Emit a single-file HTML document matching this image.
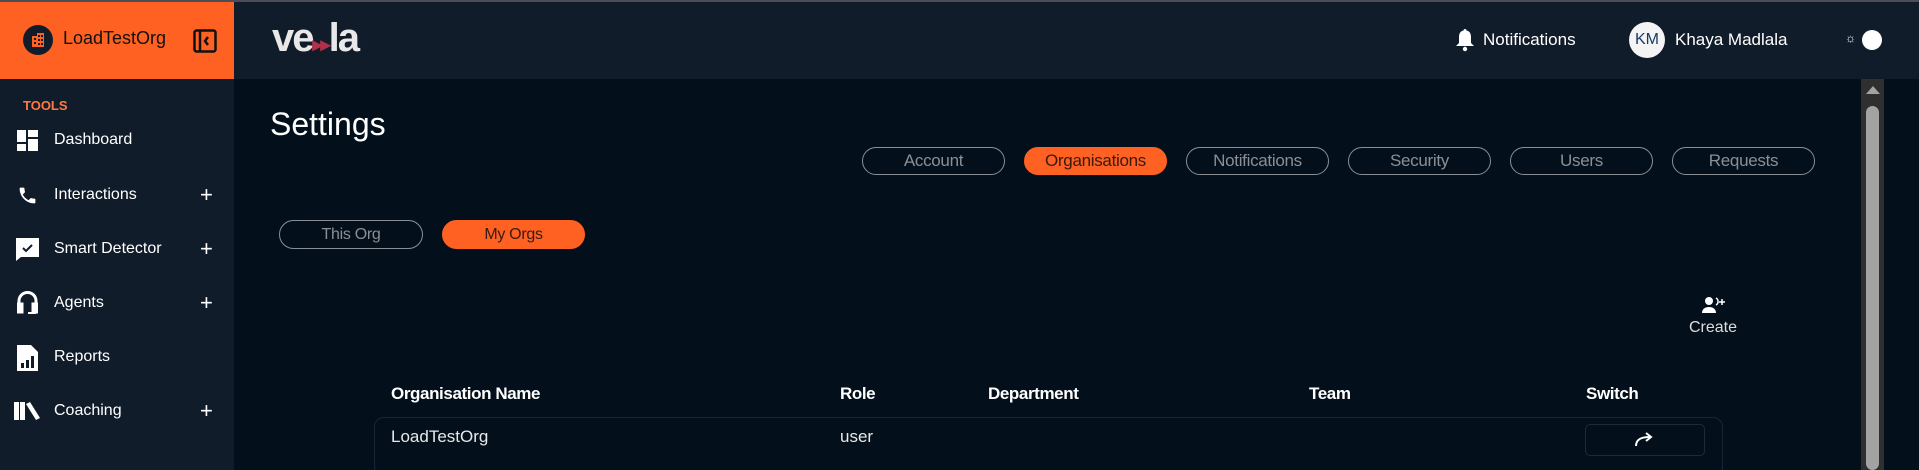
<!DOCTYPE html>
<html><head><meta charset="utf-8"><style>
*{box-sizing:border-box;margin:0;padding:0}
html,body{width:1919px;height:470px;overflow:hidden}
body{background:#03101b;font-family:"Liberation Sans",sans-serif;color:#fff;position:relative}
.abs{position:absolute}
.topline{left:0;top:0;width:1919px;height:2px;background:#4a4d55}
.brand{left:0;top:2px;width:234px;height:77px;background:#fe6121}
.side{left:0;top:79px;width:234px;height:391px;background:#111c2a}
.header{left:234px;top:2px;width:1685px;height:77px;background:#111c2a}
.item{position:absolute;left:0;width:234px;height:30px;display:flex;align-items:center}
.item span{position:absolute;left:54px;font-size:16px;color:#fff}
.item .plus{position:absolute;left:200px;font-size:22px;font-weight:300}
.tab{position:absolute;top:147px;width:143px;height:28px;border:1.5px solid #8a8f96;border-radius:15px;color:#8a8f96;font-size:17px;display:flex;align-items:center;justify-content:center;letter-spacing:-0.3px}
.tab.on{background:#fe6121;border-color:#fe6121;color:#3a1a10}
.th{position:absolute;top:384px;font-size:17px;font-weight:bold;color:#fff;letter-spacing:-0.4px}
</style></head><body>
<div class="abs topline"></div>
<div class="abs brand">
 <div class="abs" style="left:23px;top:23px;width:30px;height:30px;border-radius:50%;background:#111c2a"></div>
 <svg class="abs" style="left:30px;top:30px" width="16" height="16" viewBox="0 0 16 16"><path d="M2 15V4h5V1h7v14z" fill="#fe6121"/><g fill="#111c2a"><rect x="4" y="6" width="2" height="2"/><rect x="8" y="3" width="2" height="2"/><rect x="11" y="3" width="2" height="2"/><rect x="8" y="7" width="2" height="2"/><rect x="11" y="7" width="2" height="2"/><rect x="4" y="10" width="2" height="2"/><rect x="8" y="11" width="2" height="2"/><rect x="11" y="11" width="2" height="2"/></g></svg>
 <div class="abs" style="left:63px;top:26px;font-size:18px;color:#111;font-weight:500">LoadTestOrg</div>
 <svg class="abs" style="left:193px;top:27px" width="24" height="24" viewBox="0 0 24 24" fill="none" stroke="#111" stroke-width="2.5"><rect x="1.5" y="1.5" width="21" height="21" rx="2"/><line x1="7" y1="2" x2="7" y2="22"/><path d="M15 8l-3 4 3 4"/></svg>
</div>
<div class="abs side">
 <div class="abs" style="left:23px;top:19px;font-size:13px;font-weight:bold;color:#fe7a42">TOOLS</div>
 <div class="item" style="top:46px"><svg class="abs" style="left:17px" width="21" height="21" viewBox="0 0 21 21" fill="#fff"><rect x="0" y="0" width="9" height="12"/><rect x="11" y="0" width="10" height="7"/><rect x="0" y="14" width="9" height="7"/><rect x="11" y="9" width="10" height="12"/></svg><span>Dashboard</span></div>
 <div class="item" style="top:101px"><svg class="abs" style="left:17px" width="21" height="21" viewBox="0 0 24 24" fill="#fff"><path d="M6.6 10.8c1.4 2.8 3.8 5.1 6.6 6.6l2.2-2.2c.3-.3.7-.4 1-.2 1.1.4 2.3.6 3.6.6.6 0 1 .4 1 1V20c0 .6-.4 1-1 1C10.6 21 3 13.4 3 4c0-.6.4-1 1-1h3.5c.6 0 1 .4 1 1 0 1.3.2 2.5.6 3.6.1.3 0 .7-.2 1z"/></svg><span>Interactions</span><b class="plus">+</b></div>
 <div class="item" style="top:155px"><svg class="abs" style="left:16px" width="23" height="23" viewBox="0 0 23 23"><path d="M0 0h23v19H5l-5 4z" fill="#fff"/><path d="M7 10l3 3 6-6" stroke="#111c2a" stroke-width="2" fill="none"/></svg><span>Smart Detector</span><b class="plus">+</b></div>
 <div class="item" style="top:209px"><svg class="abs" style="left:17px" width="21" height="24" viewBox="0 0 21 24" fill="none" stroke="#fff" stroke-width="3"><path d="M2 16v-6a8.5 8.5 0 0117 0v6"/><rect x="1" y="13" width="4" height="8" fill="#fff"/><rect x="16" y="13" width="4" height="8" fill="#fff"/><path d="M18 21v1h-7" stroke-width="2"/></svg><span>Agents</span><b class="plus">+</b></div>
 <div class="item" style="top:263px"><svg class="abs" style="left:17px" width="21" height="27" viewBox="0 0 21 27"><path d="M0 1h14l7 7v19H0z" fill="#fff"/><g fill="#111c2a"><rect x="4" y="19" width="3" height="5"/><rect x="9" y="16" width="3" height="8"/><rect x="14" y="12" width="3" height="12"/></g></svg><span>Reports</span></div>
 <div class="item" style="top:317px"><svg class="abs" style="left:14px" width="26" height="18" viewBox="0 0 26 18" fill="#fff"><rect x="0" y="0" width="5" height="18"/><rect x="6" y="0" width="5" height="18"/><path d="M12 2l4-2 10 16-4 2z"/></svg><span>Coaching</span><b class="plus">+</b></div>
</div>
<div class="abs header">
 <div class="abs" style="left:38px;top:14px;font-size:40px;font-weight:bold;color:#e8e8e8;letter-spacing:-2px">ve<span style="color:#b0304a;font-size:20px">▸▸</span>la</div>
 <svg class="abs" style="left:1221px;top:26px" width="20" height="24" viewBox="0 0 20 24" fill="#fff"><path d="M10 1c1 0 1.5.7 1.5 1.5C15 3.3 16 6 16 9v6l3 3H1l3-3V9c0-3 1-5.7 4.5-6.5C8.5 1.7 9 1 10 1z"/><circle cx="10" cy="21" r="2.2"/></svg>
 <div class="abs" style="left:1249px;top:28px;font-size:17px">Notifications</div>
 <div class="abs" style="left:1395px;top:20px;width:36px;height:36px;border-radius:50%;background:#f4f4f4;color:#1a3a6a;font-size:16px;display:flex;align-items:center;justify-content:center">KM</div>
 <div class="abs" style="left:1441px;top:28px;font-size:17px">Khaya Madlala</div>
 <div class="abs" style="left:1611px;top:29px;font-size:12px">☼</div>
 <div class="abs" style="left:1628px;top:28px;width:20px;height:20px;border-radius:50%;background:#fff"></div>
</div>
<div class="abs" style="left:270px;top:106px;font-size:32px;font-weight:300">Settings</div>
<div class="tab" style="left:862px">Account</div>
<div class="tab on" style="left:1024px">Organisations</div>
<div class="tab" style="left:1186px">Notifications</div>
<div class="tab" style="left:1348px">Security</div>
<div class="tab" style="left:1510px">Users</div>
<div class="tab" style="left:1672px">Requests</div>
<div class="tab" style="left:279px;top:220px;width:144px;height:29px;font-size:16px">This Org</div>
<div class="tab on" style="left:442px;top:220px;width:143px;height:29px;font-size:16px">My Orgs</div>
<svg class="abs" style="left:1702px;top:296px" width="23" height="18" viewBox="0 0 23 18" fill="#fff"><circle cx="7" cy="5" r="4"/><path d="M0 17c0-4 3-6 7-6s7 2 7 6z"/><path d="M14 2a4 4 0 010 7" stroke="#fff" fill="none" stroke-width="1.5"/><path d="M20 3v6M17 6h6" stroke="#fff" stroke-width="1.5"/></svg>
<div class="abs" style="left:1689px;top:319px;font-size:16px;color:#ddd">Create</div>
<div class="th" style="left:391px">Organisation Name</div>
<div class="th" style="left:840px">Role</div>
<div class="th" style="left:988px">Department</div>
<div class="th" style="left:1309px">Team</div>
<div class="th" style="left:1586px">Switch</div>
<div class="abs" style="left:374px;top:417px;width:1349px;height:60px;border:1px solid #1a2533;border-radius:10px"></div>
<div class="abs" style="left:391px;top:427px;font-size:17px;color:#e8e8e8">LoadTestOrg</div>
<div class="abs" style="left:840px;top:427px;font-size:17px;color:#e8e8e8">user</div>
<div class="abs" style="left:1585px;top:424px;width:120px;height:32px;border:1px solid #1f2a38;border-radius:5px"></div>
<svg class="abs" style="left:1634px;top:431px" width="20" height="16" viewBox="0 0 20 16" fill="none" stroke="#fff" stroke-width="2"><path d="M2 15c0-6 4-9 14-9"/><path d="M12 2l5 4-5 4"/></svg>
<div class="abs" style="left:1861px;top:79px;width:23px;height:391px;background:#2f2f2f"></div>
<div class="abs" style="left:1866px;top:86px;width:0;height:0;border-left:7px solid transparent;border-right:7px solid transparent;border-bottom:8px solid #a3a3a3"></div>
<div class="abs" style="left:1866px;top:106px;width:13px;height:364px;border-radius:7px;background:#a3a3a3"></div>
</body></html>
